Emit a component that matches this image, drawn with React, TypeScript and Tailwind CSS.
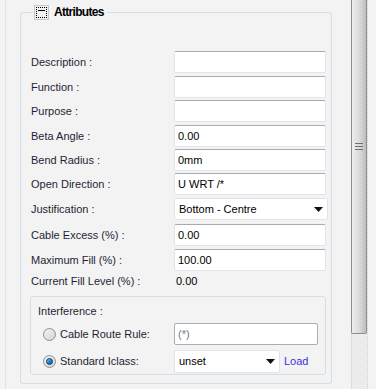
import React from 'react';

const rows: { label: string; value?: string; select?: boolean; mt: string }[] = [
  { label: 'Description :', value: '', mt: 'mt-0' },
  { label: 'Function :', value: '', mt: 'mt-[3px]' },
  { label: 'Purpose :', value: '', mt: 'mt-[2px]' },
  { label: 'Beta Angle :', value: '0.00', mt: 'mt-[3px]' },
  { label: 'Bend Radius :', value: '0mm', mt: 'mt-[2px]' },
  { label: 'Open Direction :', value: 'U WRT /*', mt: 'mt-[2px]' },
  { label: 'Justification :', value: 'Bottom - Centre', select: true, mt: 'mt-[3px]' },
  { label: 'Cable Excess (%) :', value: '0.00', mt: 'mt-[4px]' },
  { label: 'Maximum Fill (%) :', value: '100.00', mt: 'mt-[3px]' },
];

const Arrow = () => (
  <svg width="9" height="5" viewBox="0 0 9 5" className="shrink-0">
    <path d="M0 0 H9 L4.5 5 Z" fill="#111" />
  </svg>
);

const TextBox = ({ value }: { value: string }) => (
  <div className="h-[22px] w-[152px] bg-white rounded-[2px] border border-[#e1e4ea] border-t-[#a9abb0] flex items-center px-[3px] text-[11px] text-black">
    {value}
  </div>
);

const Radio = ({ checked }: { checked?: boolean }) => (
  <div className="w-[13px] h-[13px] rounded-full border border-[#8c8f94] bg-gradient-to-br from-[#f4f4f4] to-[#d4d4d4] flex items-center justify-center shrink-0">
    {checked && (
      <div className="w-[7px] h-[7px] rounded-full bg-gradient-to-br from-[#5ec2f0] to-[#0b4f8c] border border-[#0c3f6f]" />
    )}
  </div>
);

export default function App() {
  return (
    <div
      className="w-[376px] h-[389px] bg-[#f3f3f3] flex overflow-hidden text-[#1f1f33]"
      style={{ fontFamily: '"Liberation Sans", Arial, sans-serif' }}
    >
      {/* main panel */}
      <div className="w-[351px] h-full flex">
        <div className="w-[8px] h-full border-r border-dotted border-[#d3d3d3]" />
        <div className="flex-1 pl-[14px] pr-[19px] pt-[4px]">
          <fieldset className="w-[310px] h-[380px] border border-[#d5dee5] rounded-[3px] pl-[9px] pr-[3px]">
            <legend className="ml-[4px] pr-[3px] flex items-center h-[16px]">
              <span className="w-[15px] h-[15px] border border-[#c5cad0] bg-[#f0f0f0] flex items-center justify-center mr-[5px]">
                <span className="w-[11px] h-[11px] border border-dotted border-black flex justify-center pt-[2px]">
                  <span className="w-[7px] h-[1px] bg-black" />
                </span>
              </span>
              <span className="text-[12px] font-bold tracking-[-0.7px] text-black">Attributes</span>
            </legend>

            <div className="pt-[31px] flex flex-col">
              {rows.map((r) => (
                <div key={r.label} className={`flex items-center h-[22px] ${r.mt}`}>
                  <div className="w-[144px] pl-[1px] text-[11px]">{r.label}</div>
                  {r.select ? (
                    <div className="h-[22px] w-[154px] bg-white rounded-[2px] border border-[#e1e4ea] flex items-center justify-between pl-[4px] pr-[4px] text-[11px] text-black">
                      <span>{r.value}</span>
                      <Arrow />
                    </div>
                  ) : (
                    <TextBox value={r.value ?? ''} />
                  )}
                </div>
              ))}
              <div className="flex items-center h-[20px]">
                <div className="w-[144px] pl-[1px] text-[11px]">Current Fill Level (%) :</div>
                <div className="pl-[2px] text-[11px] text-black">0.00</div>
              </div>

              <div className="mt-[5px] w-[296px] h-[79px] border border-[#d5dee5] rounded-[3px] pl-[7px] pt-[8px]">
                <div className="text-[11px] leading-[13px]">Interference :</div>
                <div className="flex items-center h-[22px] mt-[5px]">
                  <div className="w-[136px] pl-[5px] flex items-center gap-[4px]">
                    <Radio />
                    <span className="text-[11px]">Cable Route Rule:</span>
                  </div>
                  <div className="h-[22px] w-[144px] bg-white rounded-[2px] border border-[#abadb3] flex items-center px-[3px] text-[11px] text-[#6d7c8e]">
                    (*)
                  </div>
                </div>
                <div className="flex items-center h-[23px] mt-[5px]">
                  <div className="w-[136px] pl-[5px] flex items-center gap-[4px]">
                    <Radio checked />
                    <span className="text-[11px]">Standard Iclass:</span>
                  </div>
                  <div className="h-[23px] w-[106px] bg-white rounded-[2px] border border-[#e1e4ea] flex items-center justify-between pl-[4px] pr-[4px] text-[11px] text-black">
                    <span>unset</span>
                    <Arrow />
                  </div>
                  <span className="ml-[4px] text-[11px] text-[#3b2fd6]">Load</span>
                </div>
              </div>
            </div>
          </fieldset>
        </div>
      </div>

      {/* scrollbar */}
      <div className="w-[16px] h-full flex flex-col bg-[#ececec] border-l border-[#dcdcdc]">
        <div className="h-[334px] -ml-[1px] w-[16px] rounded-b-[2px] border border-t-0 border-[#8e8e8e] bg-gradient-to-r from-[#eeeeee] via-[#dcdcdc] to-[#bdbdbd] flex items-center justify-center pt-[2px]">
          <div className="flex flex-col gap-[2px] -mt-[42px]">
            <div className="w-[8px] h-[1px] bg-[#6f6f6f]" />
            <div className="w-[8px] h-[1px] bg-[#6f6f6f]" />
            <div className="w-[8px] h-[1px] bg-[#6f6f6f]" />
          </div>
        </div>
      </div>
      <div className="flex-1 h-full border-l border-dotted border-[#cfcfcf] bg-[#f3f3f3]" />
    </div>
  );
}
